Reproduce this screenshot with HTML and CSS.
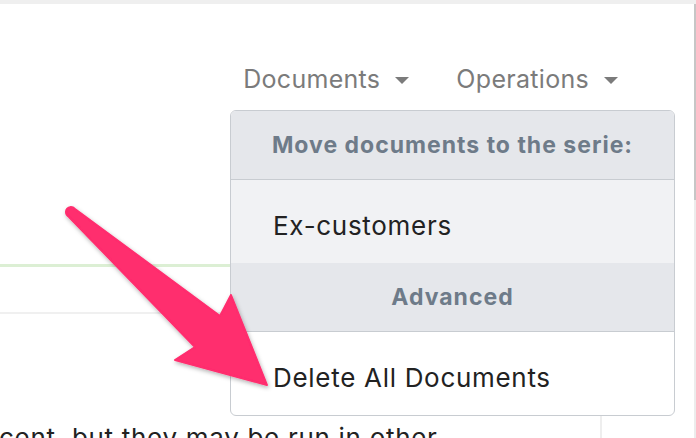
FILE: index.html
```html
<!DOCTYPE html>
<html>
<head>
<meta charset="utf-8">
<link rel="stylesheet" href="styles.css">
</head>
<body>
<div class="page">
  <div class="topbar"></div>
  <div class="layout">
    <div class="main">
      <nav class="nav">
        <span class="nav-item">Documents <span class="caret"></span></span>
        <span class="nav-item">Operations <span class="caret"></span></span>
      </nav>
      <div class="content">
        <div class="left">
          <div class="green-rule"></div>
          <div class="rule"></div>
          <p class="para">cent, but they may be run in other</p>
        </div>
        <div class="right"></div>
      </div>
    </div>
    <div class="scrollbar"><div class="thumb"></div></div>
  </div>

  <div class="dropdown">
    <div class="dd-header first">Move documents to the serie:</div>
    <div class="dd-item alt">Ex-customers</div>
    <div class="dd-header">Advanced</div>
    <div class="dd-item">Delete All Documents</div>
  </div>

  <svg class="arrow" width="696" height="438" viewBox="0 0 696 438">
    <defs>
      <filter id="sh" x="-20%" y="-20%" width="140%" height="140%">
        <feDropShadow dx="1" dy="2" stdDeviation="2" flood-color="#000" flood-opacity="0.3"/>
      </filter>
    </defs>
    <path filter="url(#sh)" fill="#ff2d6e" stroke="#ff2d6e" stroke-width="2" stroke-linejoin="round"
      d="M 71 207 Q 66 208 66 212 Q 66 215 69 217 L 195 347 L 175 360 L 267 385 L 231 295 L 220 316 L 75 209 Q 73 207 71 207 Z"/>
  </svg>
</div>
</body>
</html>
```
FILE: styles.css
```css
html, body {
  margin: 0;
  padding: 0;
  background: #fff;
}
body {
  font-family: Inter, "Open Sans", sans-serif;
}
.page {
  position: relative;
  width: 696px;
  height: 438px;
  overflow: hidden;
}
.topbar {
  height: 4px;
  background: #efefef;
}
.layout {
  display: flex;
  height: 434px;
}
.main {
  flex: 1;
  display: flex;
  flex-direction: column;
}
.scrollbar {
  width: 2px;
  background: #ececec;
}
.thumb {
  height: 196px;
  background: #c6c6c6;
}
.nav {
  display: flex;
  justify-content: flex-end;
  gap: 47px;
  padding: 60px 76px 16px 0;
  height: 30px;
  line-height: 30px;
}
.nav-item {
  font-size: 25px;
  color: #7b7b7b;
  display: flex;
  align-items: center;
  gap: 15px;
  letter-spacing: 0.3px;
}
.caret {
  width: 0;
  height: 0;
  border-left: 7px solid transparent;
  border-right: 7px solid transparent;
  border-top: 7px solid #7b7b7b;
  margin-top: 2px;
}
.content {
  flex: 1;
  display: flex;
}
.left {
  width: 600px;
  border-right: 2px solid #eeeeee;
}
.right {
  flex: 1;
}
.green-rule {
  margin-top: 154px;
  height: 3px;
  background: #dcefd4;
}
.rule {
  margin-top: 45px;
  height: 2px;
  background: #f0f0f0;
}
.para {
  margin: 108px 0 0 -1px;
  font-size: 26px;
  letter-spacing: 0.7px;
  color: #222;
  white-space: nowrap;
}
.dropdown {
  position: absolute;
  left: 230px;
  top: 110px;
  width: 443px;
  border: 1.5px solid #c8ccd1;
  border-radius: 6px;
  overflow: hidden;
  background: #fff;
}
.dd-header {
  background: #e5e7eb;
  color: #6e7b89;
  font-weight: 700;
  font-size: 23px;
  letter-spacing: 1px;
  text-align: center;
  height: 68px;
  line-height: 68px;
  border-bottom: 1.5px solid #c8ccd1;
}
.dd-item {
  height: 75px;
  line-height: 75px;
  padding: 8px 0 0 42px;
  font-size: 26px;
  letter-spacing: 0.7px;
  color: #222;
}
.dd-item.alt {
  background: #f1f2f4;
}
.arrow {
  position: absolute;
  left: 0;
  top: 0;
  pointer-events: none;
}
```
